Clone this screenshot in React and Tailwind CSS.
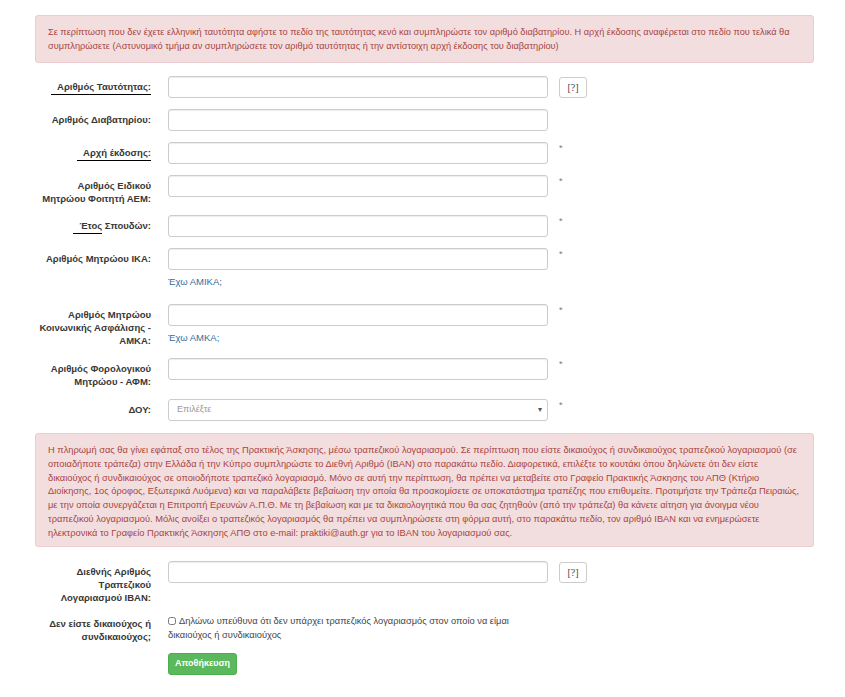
import React from 'react';

const Label = ({children}) => (
    <div className="w-[116px] shrink-0 pt-[4px] text-right text-[9.5px] font-bold leading-[13px] text-[#383838]">
      {children}
    </div>
);

const Under = ({children}) => (
    <span className="inline-block border-b border-black pl-[6px] leading-[12px] pb-[1px]">{children}</span>
);

const TextInput = () => (
    <input
        type="text"
        className="block w-[380px] h-[22px] rounded-[3px] border border-[#ccc] bg-white shadow-[inset_0_1px_1px_rgba(0,0,0,0.075)] px-2 text-[10px] outline-none"
    />
);

const Star = () => <span className="ml-[11px] mt-[1px] text-[9px] leading-[10px] text-[#777]">*</span>;

const HelpBtn = () => (
    <button className="ml-[11px] mt-[1px] h-[21px] w-[28px] rounded-[3px] border border-[#ccc] bg-white text-[10px] text-[#444] font-['Liberation_Serif',serif]">
      [?]
    </button>
);

const Row = ({label, extra, help, className = ''}) => (
    <div className={`flex items-start ${className}`}>
      <Label>{label}</Label>
      <div className="ml-[17px]">
        <TextInput/>
        {help && <div className="mt-[5px] text-[9.5px] leading-[13px] text-[#3a6d9a]">{help}</div>}
      </div>
      {extra}
    </div>
);

export default function App() {
  return (
      <div className="min-h-screen bg-white pt-[15px] pl-[35px] pb-4 font-['Liberation_Sans',Arial,sans-serif]">
        {/* πρώτη ειδοποίηση */}
        <div className="w-[779px] rounded-[3px] border border-[#ebccd1] bg-[#f2dede] px-[12px] pt-[9px] pb-[9px] text-[9.2px] leading-[14px] text-[#a94442]">
          Σε περίπτωση που δεν έχετε ελληνική ταυτότητα αφήστε το πεδίο της ταυτότητας κενό και συμπληρώστε τον αριθμό διαβατηρίου. Η αρχή έκδοσης αναφέρεται στο πεδίο που τελικά θα συμπληρώσετε (Αστυνομικό τμήμα αν συμπληρώσετε τον αριθμό ταυτότητας ή την αντίστοιχη αρχή έκδοσης του διαβατηρίου)
        </div>

        <div className="mt-[13px] flex flex-col gap-[11px]">
          <Row label={<Under>Αριθμός Ταυτότητας:</Under>} extra={<HelpBtn/>}/>
          <Row label="Αριθμός Διαβατηρίου:"/>
          <Row label={<Under>Αρχή έκδοσης:</Under>} extra={<Star/>}/>
          <Row label={<>Αριθμός Ειδικού<br/>Μητρώου Φοιτητή ΑΕΜ:</>} extra={<Star/>} className="-mb-[1px]"/>
          <Row label={<><Under>Έτος</Under> Σπουδών:</>} extra={<Star/>}/>
          <Row label="Αριθμός Μητρώου ΙΚΑ:" extra={<Star/>} help="Έχω ΑΜΙΚΑ;" className="pb-[5px]"/>
          <Row label={<>Αριθμός Μητρώου<br/>Κοινωνικής Ασφάλισης -<br/>ΑΜΚΑ:</>} extra={<Star/>} help="Έχω ΑΜΚΑ;"/>
          <Row label={<>Αριθμός Φορολογικού<br/>Μητρώου - ΑΦΜ:</>} extra={<Star/>}/>

          <div className="flex items-start">
            <Label>ΔΟΥ:</Label>
            <div className="ml-[17px] flex h-[22px] w-[380px] items-center justify-between rounded-[3px] border border-[#ccc] bg-white pl-[8px] pr-[5px] text-[9px] text-[#999]">
              <span>Επιλέξτε</span>
              <span className="text-[8px] text-[#555]">▾</span>
            </div>
            <Star/>
          </div>
        </div>

        {/* δεύτερη ειδοποίηση */}
        <div className="mt-[12px] w-[779px] rounded-[3px] border border-[#ebccd1] bg-[#f2dede] px-[12px] pt-[10px] pb-[5px] text-[9.3px] leading-[13.8px] text-[#a94442]">
          Η πληρωμή σας θα γίνει εφάπαξ στο τέλος της Πρακτικής Άσκησης, μέσω τραπεζικού λογαριασμού. Σε περίπτωση που είστε δικαιούχος ή συνδικαιούχος τραπεζικού λογαριασμού (σε οποιαδήποτε τράπεζα) στην Ελλάδα ή την Κύπρο συμπληρώστε το Διεθνή Αριθμό (IBAN) στο παρακάτω πεδίο. Διαφορετικά, επιλέξτε το κουτάκι όπου δηλώνετε ότι δεν είστε δικαιούχος ή συνδικαιούχος σε οποιοδήποτε τραπεζικό λογαριασμό. Μόνο σε αυτή την περίπτωση, θα πρέπει να μεταβείτε στο Γραφείο Πρακτικής Άσκησης του ΑΠΘ (Κτήριο Διοίκησης, 1ος όροφος, Εξωτερικά Λυόμενα) και να παραλάβετε βεβαίωση την οποία θα προσκομίσετε σε υποκατάστημα τραπέζης που επιθυμείτε. Προτιμήστε την Τράπεζα Πειραιώς, με την οποία συνεργάζεται η Επιτροπή Ερευνών Α.Π.Θ. Με τη βεβαίωση και με τα δικαιολογητικά που θα σας ζητηθούν (από την τράπεζα) θα κάνετε αίτηση για άνοιγμα νέου τραπεζικού λογαριασμού. Μόλις ανοίξει ο τραπεζικός λογαριασμός θα πρέπει να συμπληρώσετε στη φόρμα αυτή, στο παρακάτω πεδίο, τον αριθμό IBAN και να ενημερώσετε ηλεκτρονικά το Γραφείο Πρακτικής Άσκησης ΑΠΘ στο e-mail: praktiki@auth.gr για το IBAN του λογαριασμού σας.
        </div>

        <div className="mt-[14px] flex flex-col">
          <Row label={<>Διεθνής Αριθμός<br/>Τραπεζικού<br/>Λογαριασμού IBAN:</>} extra={<HelpBtn/>}/>

          <div className="mt-[9px] flex items-start">
            <Label>Δεν είστε δικαιούχος ή<br/>συνδικαιούχος;</Label>
            <label className="ml-[17px] w-[380px] pt-[1px] text-[9.3px] leading-[14px] text-[#444]">
              <input type="checkbox" className="mr-[3px] h-[8px] w-[8px] align-[-1px] accent-gray-400"/>
              Δηλώνω υπεύθυνα ότι δεν υπάρχει τραπεζικός λογαριασμός στον οποίο να είμαι δικαιούχος ή συνδικαιούχος
            </label>
          </div>

          <div className="mt-[10px] flex">
            <div className="w-[116px] shrink-0"/>
            <button className="ml-[17px] h-[22px] w-[69px] rounded-[3px] border border-[#4cae4c] bg-[#5cb85c] text-[9px] font-bold text-white">
              Αποθήκευση
            </button>
          </div>
        </div>
      </div>
  );
}
